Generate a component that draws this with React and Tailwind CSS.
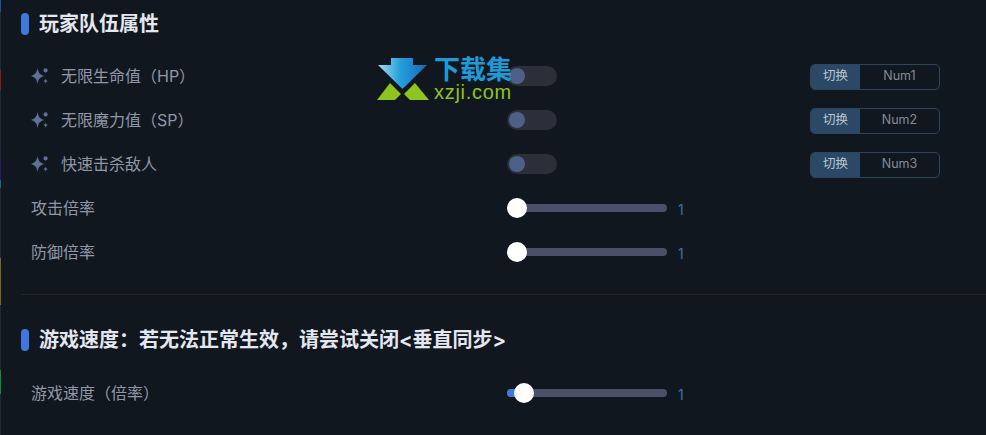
const FONT = "font-['Inter','Noto_Sans_CJK_SC',sans-serif]";

function Sparkle() {
  return (
    <svg width="18" height="18" viewBox="0 0 18 18" className="shrink-0" fill="#5f6f96">
      <path d="M6.5 0.8 C7.3 5.6 8.6 7.6 13.2 9 C8.6 10.4 7.3 12.4 6.5 17.2 C5.7 12.4 4.4 10.4 -0.2 9 C4.4 7.6 5.7 5.6 6.5 0.8Z" />
      <circle cx="14.6" cy="3.4" r="2.1" />
      <path d="M14.6 11.4 C14.9 13 15.5 13.7 17.2 14.1 C15.5 14.5 14.9 15.2 14.6 16.8 C14.3 15.2 13.7 14.5 12 14.1 C13.7 13.7 14.3 13 14.6 11.4Z" />
    </svg>
  );
}

function Title({ children }) {
  return (
    <div className="flex h-[22px] items-center gap-[10px]">
      <div className="h-[22px] w-2 rounded-[4px] bg-[#3f78e0]" />
      <div className="text-[20px] font-bold leading-[22px] text-[#e4e7ef]">{children}</div>
    </div>
  );
}

function Label({ icon, children }) {
  return (
    <div className="flex w-[486px] items-center gap-3 pl-[10px] text-[16px] text-[#8f98a8]">
      {icon && <Sparkle />}
      <span>{children}</span>
    </div>
  );
}

function Toggle() {
  return (
    <div className="flex h-5 w-[50px] items-center rounded-full bg-[#2b2f3a] pl-[2px]">
      <div className="h-4 w-4 rounded-full bg-[#4f6087]" />
    </div>
  );
}

function Hotkey({ k }) {
  return (
    <div className="ml-auto mr-[46px] mt-px flex h-[26px] w-[130px] overflow-hidden rounded-[5px] border border-[#2b4661] text-[12.5px]">
      <div className="flex w-[49px] items-center justify-center bg-[#2b4966] text-[#bcc6d2]">切换</div>
      <div className="flex flex-1 items-center justify-center text-[#838b99]">{k}</div>
    </div>
  );
}

function ToggleRow({ label, k }) {
  return (
    <div className="flex h-11 items-center">
      <Label icon>{label}</Label>
      <Toggle />
      <Hotkey k={k} />
    </div>
  );
}

function Slider({ fill }) {
  return (
    <div className="flex items-center">
      <div className="relative h-2 w-40 rounded-full bg-[#4a5068]">
        {fill && <div className="absolute left-0 top-0 h-2 w-4 rounded-l-full bg-[#3f78e0]" />}
        <div
          className={`absolute top-1/2 h-5 w-5 -translate-y-1/2 rounded-full bg-white ${fill ? "left-[7px]" : "left-0"}`}
        />
      </div>
      <span className="ml-[11px] mt-[2px] text-[14px] text-[#3d6db8]">1</span>
    </div>
  );
}

function SliderRow({ label, fill }) {
  return (
    <div className="flex h-11 items-center">
      <Label>{label}</Label>
      <Slider fill={fill} />
    </div>
  );
}

function Watermark() {
  return (
    <div className="absolute left-[376px] top-[57px] flex items-start gap-1">
      <svg width="54" height="44" viewBox="0 0 54 44">
        <defs>
          <linearGradient id="wmArrow" x1="0" y1="0" x2="1" y2="0">
            <stop offset="0" stopColor="#a5dcf5" />
            <stop offset="0.45" stopColor="#25a0dc" />
            <stop offset="1" stopColor="#1768b4" />
          </linearGradient>
        </defs>
        <path d="M15 1 H37 V8 H51 L26.5 32 L2 8 H15 Z" fill="url(#wmArrow)" />
        <path d="M14 26 L25 37 L19 43 H1 Z" fill="#8fc31f" />
        <path d="M39 26 L53 43 H34 L28 37 Z" fill="#8fc31f" />
      </svg>
      <div className="flex flex-col">
        <span className="text-[26px] font-bold leading-[25px] text-[#1e9ad6]">下载集</span>
        <span className="font-['Liberation_Sans',sans-serif] text-[20px] leading-[21px] tracking-[0.7px] text-[#8fc31f]">xzji.com</span>
      </div>
    </div>
  );
}

function EdgeStrip() {
  return (
    <div className="absolute left-0 top-0 flex h-full w-px flex-col bg-[#1f2b3a]">
      <div className="h-3 bg-[#1f4f9a]" />
      <div className="mt-[58px] h-[20px] bg-[#8b1a1a]" />
      <div className="mt-[68px] h-[22px] bg-[#2a1a70]" />
      <div className="h-[8px] bg-[#106a80]" />
      <div className="mt-[70px] h-[47px] bg-[#7a6a1a]" />
      <div className="mt-[65px] h-[24px] bg-[#0f8a40]" />
    </div>
  );
}

export default function App() {
  return (
    <div className={`relative h-[435px] w-[986px] overflow-hidden bg-[#11171e] pl-[21px] pt-[13px] ${FONT}`}>
      <EdgeStrip />
      <Title>玩家队伍属性</Title>
      <div className="mt-[19px]">
        <ToggleRow label="无限生命值（HP）" k="Num1" />
        <ToggleRow label="无限魔力值（SP）" k="Num2" />
        <ToggleRow label="快速击杀敌人" k="Num3" />
        <SliderRow label="攻击倍率" />
        <SliderRow label="防御倍率" />
      </div>
      <div className="mt-[20px] h-px bg-[#20261f]" />
      <div className="mt-[34px]">
        <Title>游戏速度：若无法正常生效，请尝试关闭&lt;垂直同步&gt;</Title>
      </div>
      <div className="mt-[20px]">
        <SliderRow label="游戏速度（倍率）" fill />
      </div>
      <Watermark />
    </div>
  );
}
